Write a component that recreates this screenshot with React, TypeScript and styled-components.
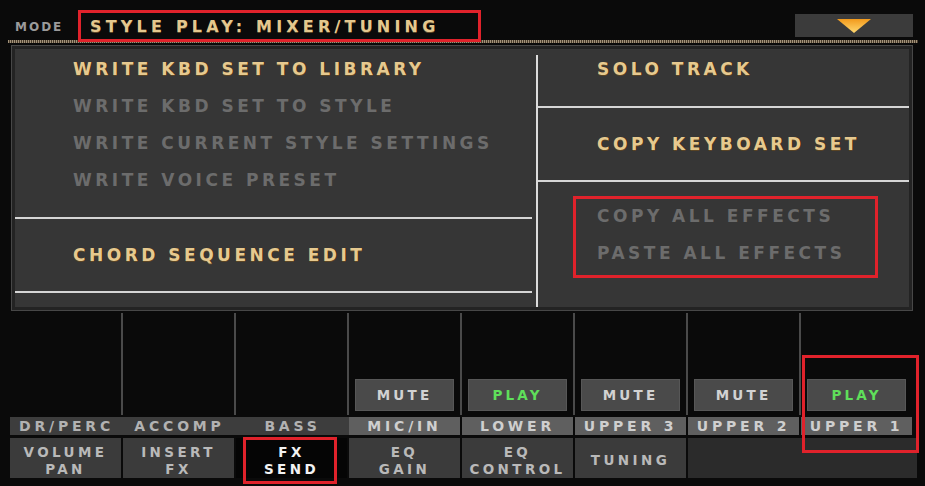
import React from "react";
import styled, { createGlobalStyle, css } from "styled-components";

const Global = createGlobalStyle`
  html, body { margin: 0; padding: 0; background: #0a0a0a; }
  body { font-family: "DejaVu Sans", "Liberation Sans", sans-serif; }
  * { box-sizing: border-box; }
`;

const Screen = styled.div`
  position: relative;
  width: 925px;
  height: 486px;
  background: #0a0a0a;
  overflow: hidden;
  display: flex;
  flex-direction: column;
`;

const TopBar = styled.div`
  height: 40px;
  padding: 14px 12px 0 15px;
  display: flex;
  align-items: flex-start;
`;

const ModeLabel = styled.span`
  font-size: 12px;
  font-weight: bold;
  letter-spacing: 2px;
  color: #9a9a9a;
  line-height: 26px;
  width: 75px;
`;

const ModeTitle = styled.span`
  font-size: 16px;
  font-weight: bold;
  letter-spacing: 4.2px;
  color: #e4c88e;
  text-shadow: 0 1px 0 #5b4526;
  line-height: 26px;
  flex: 1;
  white-space: nowrap;
`;

const ArrowButton = styled.div`
  width: 118px;
  height: 23px;
  background: #3b3b3b;
  display: flex;
  align-items: center;
  justify-content: center;
`;

const DottedRule = styled.div`
  height: 3px;
  margin: 0 7px 0 8px;
  background: repeating-linear-gradient(90deg, #a2927a 0 1px, #4c3f2e 1px 2px);
`;

const Panel = styled.div`
  margin: 3px 13px 0 12px;
  height: 264px;
  border: 3px solid #232323;
  box-shadow: 0 0 0 1px #474747;
  background: #363636;
  display: flex;
`;

const LeftCol = styled.div`
  width: 521px;
  padding-right: 4px;
  display: flex;
  flex-direction: column;
`;

const RightCol = styled.div`
  flex: 1;
  display: flex;
  flex-direction: column;
`;

const VDivider = styled.div`
  width: 2px;
  margin-top: 6px;
  background: #dcdcdc;
`;

const HLine = styled.div`
  height: 2px;
  background: #d6d6d6;
`;

const Section = styled.div<{ $h: number; $pt?: number; $center?: boolean }>`
  height: ${(p) => p.$h}px;
  padding-top: ${(p) => p.$pt ?? 0}px;
  display: flex;
  flex-direction: column;
  ${(p) => p.$center && css`justify-content: center;`}
`;

const Grow = styled.div`
  flex: 1;
`;

const Item = styled.div<{ $on?: boolean; $indent: number }>`
  height: 37px;
  line-height: 37px;
  padding-left: ${(p) => p.$indent}px;
  font-size: 17px;
  font-weight: bold;
  letter-spacing: 3.5px;
  white-space: nowrap;
  color: ${(p) => (p.$on ? "#e6c98f" : "#6c6c6c")};
  text-shadow: ${(p) => (p.$on ? "0 1px 0 #5a4424, 1px 0 0 #3a2c18" : "none")};
`;

const Strip = styled.div`
  margin: 3px 0 0 10px;
  width: 904px;
  display: grid;
  grid-template-columns: repeat(8, 113px);
`;

const Channel = styled.div<{ $last?: boolean }>`
  height: 102px;
  border-right: 2px solid ${(p) => (p.$last ? "transparent" : "#4a4a4a")};
  display: flex;
  flex-direction: column;
  justify-content: flex-end;
  padding: 0 6px 4px 6px;
`;

const StateButton = styled.div<{ $play?: boolean }>`
  height: 32px;
  background: #4a4a4a;
  border: 1px solid #575757;
  display: flex;
  align-items: center;
  justify-content: center;
  font-size: 13.5px;
  font-weight: bold;
  letter-spacing: 3.2px;
  color: ${(p) => (p.$play ? "#5fe05a" : "#d2d2d2")};
`;

const Label = styled.div<{ $active?: boolean }>`
  margin-top: 2px;
  height: 18px;
  margin-right: ${(p) => (p.$active ? 2 : 0)}px;
  background: ${(p) => (p.$active ? "#5f5f5f" : "#3d3d3d")};
  color: ${(p) => (p.$active ? "#cfcfcf" : "#b2b2b2")};
  font-size: 14px;
  font-weight: bold;
  letter-spacing: 3.8px;
  line-height: 18px;
  text-align: center;
  white-space: nowrap;
  overflow: hidden;
`;

const Tabs = styled.div`
  margin: 3px 0 0 10px;
  width: 904px;
  height: 40px;
  display: grid;
  grid-template-columns: repeat(6, 113px) 1fr;
`;

const Tab = styled.div<{ $selected?: boolean }>`
  margin-right: 2px;
  padding-top: 5px;
  background: ${(p) => (p.$selected ? "#050505" : "#3b3b3b")};
  color: ${(p) => (p.$selected ? "#f2f2f2" : "#b9b9b9")};
  display: flex;
  flex-direction: column;
  align-items: center;
  justify-content: center;
  font-size: 13.5px;
  font-weight: bold;
  letter-spacing: 3.4px;
  line-height: 16.5px;
  text-align: center;
  white-space: nowrap;
`;

const TabFiller = styled.div`
  background: #2b2b2b;
  margin-right: -3px;
`;

const Marker = styled.div<{ $x: number; $y: number; $w: number; $h: number }>`
  position: absolute;
  left: ${(p) => p.$x}px;
  top: ${(p) => p.$y}px;
  width: ${(p) => p.$w}px;
  height: ${(p) => p.$h}px;
  border: 3px solid #e0222b;
  pointer-events: none;
`;

const channels = [
  { name: "DR/PERC" },
  { name: "ACCOMP" },
  { name: "BASS" },
  { name: "MIC/IN", state: "MUTE" },
  { name: "LOWER", state: "PLAY" },
  { name: "UPPER 3", state: "MUTE" },
  { name: "UPPER 2", state: "MUTE" },
  { name: "UPPER 1", state: "PLAY" },
];

const tabs = [
  ["VOLUME", "PAN"],
  ["INSERT", "FX"],
  ["FX", "SEND"],
  ["EQ", "GAIN"],
  ["EQ", "CONTROL"],
  ["TUNING"],
];

export default function App() {
  return (
    <>
      <Global />
      <Screen>
        <TopBar>
          <ModeLabel>MODE</ModeLabel>
          <ModeTitle>STYLE PLAY: MIXER/TUNING</ModeTitle>
          <ArrowButton>
            <svg width="34" height="14" viewBox="0 0 34 14">
              <defs>
                <linearGradient id="tri" x1="0" y1="0" x2="0" y2="1">
                  <stop offset="0" stopColor="#f29a1c" />
                  <stop offset="1" stopColor="#ffd870" />
                </linearGradient>
              </defs>
              <polygon points="0,0 34,0 17,14" fill="url(#tri)" />
            </svg>
          </ArrowButton>
        </TopBar>
        <DottedRule />
        <Panel>
          <LeftCol>
            <Section $h={168} $pt={2}>
              <Item $on $indent={58}>WRITE KBD SET TO LIBRARY</Item>
              <Item $indent={58}>WRITE KBD SET TO STYLE</Item>
              <Item $indent={58}>WRITE CURRENT STYLE SETTINGS</Item>
              <Item $indent={58}>WRITE VOICE PRESET</Item>
            </Section>
            <HLine />
            <Section $h={72} $center>
              <Item $on $indent={58}>CHORD SEQUENCE EDIT</Item>
            </Section>
            <HLine />
            <Grow />
          </LeftCol>
          <VDivider />
          <RightCol>
            <Section $h={57} $pt={2}>
              <Item $on $indent={59}>SOLO TRACK</Item>
            </Section>
            <HLine />
            <Section $h={72} $center>
              <Item $on $indent={59}>COPY KEYBOARD SET</Item>
            </Section>
            <HLine />
            <Section $h={125} $pt={16}>
              <Item $indent={59}>COPY ALL EFFECTS</Item>
              <Item $indent={59}>PASTE ALL EFFECTS</Item>
            </Section>
          </RightCol>
        </Panel>
        <Strip>
          {channels.map((c, i) => (
            <div key={c.name}>
              <Channel $last={i === 7}>
                {c.state && <StateButton $play={c.state === "PLAY"}>{c.state}</StateButton>}
              </Channel>
              <Label $active={!!c.state}>{c.name}</Label>
            </div>
          ))}
        </Strip>
        <Tabs>
          {tabs.map((t, i) => (
            <Tab key={i} $selected={i === 2}>
              {t.map((line) => (
                <span key={line}>{line}</span>
              ))}
            </Tab>
          ))}
          <TabFiller />
        </Tabs>
        <Marker $x={78} $y={10} $w={403} $h={32} />
        <Marker $x={573} $y={196} $w={305} $h={82} />
        <Marker $x={802} $y={355} $w={117} $h={98} />
        <Marker $x={243} $y={437} $w={94} $h={47} />
      </Screen>
    </>
  );
}
